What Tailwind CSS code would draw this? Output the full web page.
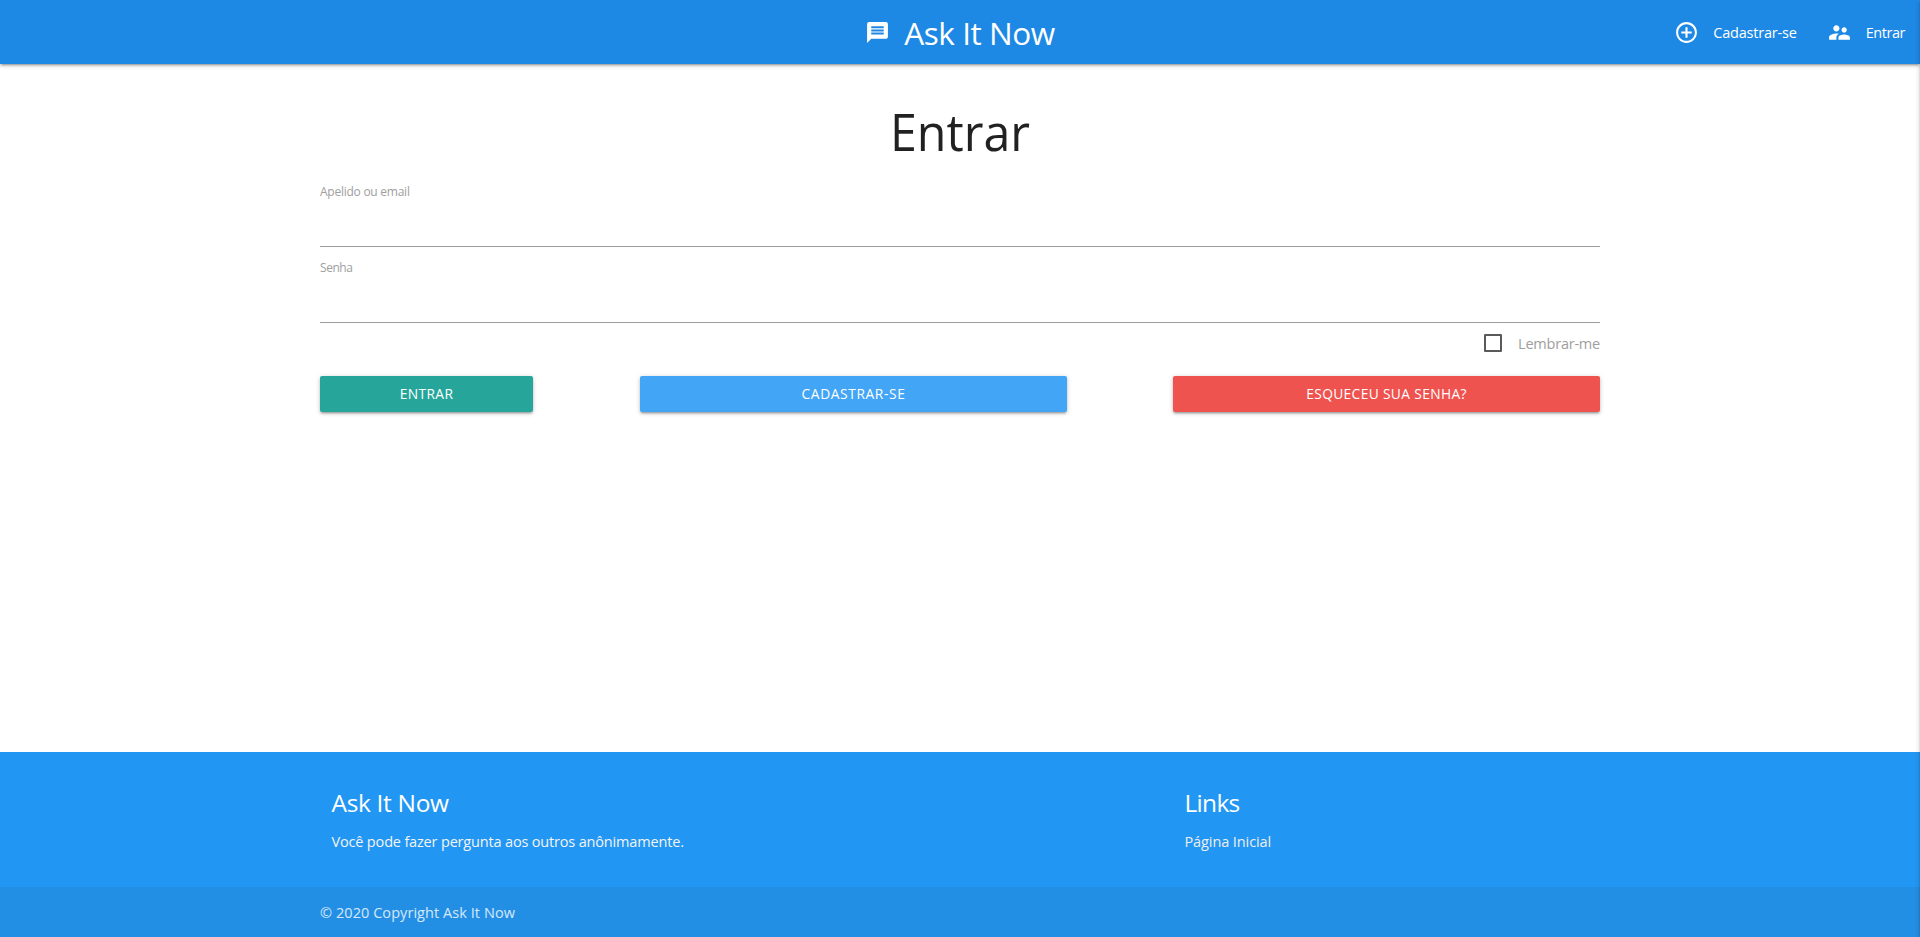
<!DOCTYPE html>
<html lang="pt-BR">
<head>
<meta charset="utf-8">
<title>Ask It Now</title>
<script src="https://cdn.jsdelivr.net/npm/@tailwindcss/browser@4"></script>
</head>
<body class="flex h-[937px] flex-col overflow-hidden bg-white font-['Open_Sans',sans-serif] text-[14.5px] text-black/87">
  <nav class="grid h-16 shrink-0 grid-cols-[1fr_auto_1fr] items-center bg-[#1e88e5] text-white shadow-[0_2px_2px_0_rgba(0,0,0,.14),0_3px_1px_-2px_rgba(0,0,0,.12),0_1px_5px_0_rgba(0,0,0,.2)]">
    <span></span>
    <a class="flex items-center gap-[14px]">
      <svg class="size-[25px]" viewBox="0 0 24 24" fill="currentColor"><path fill-rule="evenodd" d="M20 2H4c-1.100 0-2 .9-2 2v18l4-4h14c1.100 0 2-.9 2-2V4c0-1.100-.9-2-2-2zM18 14H6v-2h12v2zM18 11H6V9h12v2zM18 8H6V6h12v2z"/></svg>
      <span class="pt-0.5 text-[31.5px] leading-[62px] tracking-[-0.45px]">Ask It Now</span>
    </a>
    <div class="flex items-center justify-end pr-[15px]">
      <a class="flex items-center gap-[14px]">
        <svg class="size-[25px]" viewBox="0 0 24 24" fill="currentColor"><path d="M13 7h-2v4H7v2h4v4h2v-4h4v-2h-4V7zm-1-5C6.480 2 2 6.480 2 12s4.480 10 10 10 10-4.480 10-10S17.520 2 12 2zm0 18c-4.410 0-8-3.590-8-8s3.590-8 8-8 8 3.590 8 8-3.590 8-8 8z"/></svg>
        <span class="pt-0.5 tracking-[-0.2px]">Cadastrar-se</span>
      </a>
      <a class="ml-[30px] flex items-center gap-[14px]">
        <svg class="size-[25px]" viewBox="0 0 24 24" fill="currentColor"><path d="M16.5 12c1.380 0 2.490-1.120 2.490-2.500S17.880 7 16.500 7C15.120 7 14 8.120 14 9.500s1.120 2.500 2.500 2.500zM9 11c1.660 0 2.990-1.340 2.990-3S10.660 5 9 5C7.340 5 6 6.340 6 8s1.340 3 3 3zm7.500 3c-1.830 0-5.500.920-5.500 2.750V19h11v-2.250c0-1.830-3.670-2.750-5.500-2.750zM9 13c-2.330 0-7 1.170-7 3.500V19h7v-2.250c0-.850.330-2.340 2.370-3.470C10.500 13.100 9.660 13 9 13z"/></svg>
        <span class="pt-0.5 tracking-[-0.45px]">Entrar</span>
      </a>
    </div>
  </nav>

  <main class="mx-auto w-[1280px] grow pt-[36px]">
    <h1 class="scale-x-[.93] text-center text-[52px] leading-[62px]">Entrar</h1>
    <form>
      <label class="mt-[9px] flex h-[76px] flex-col border-b border-[#9e9e9e] pt-[13px] text-[12px] leading-4 tracking-[-0.25px] text-[#9e9e9e]">Apelido ou email</label>
      <label class="flex h-[76px] flex-col border-b border-[#9e9e9e] pt-[13px] text-[12px] leading-4 tracking-[-0.45px] text-[#9e9e9e]">Senha</label>
      <label class="mt-[11px] flex h-[18px] items-center justify-end gap-4 tracking-[-0.22px] text-[#9e9e9e]">
        <span class="size-[18px] rounded-[1px] border-2 border-[#5a5a5a]"></span>
        <span class="pt-px">Lembrar-me</span>
      </label>
      <div class="mt-6 flex justify-between text-[13.8px] text-white">
        <a class="h-9 w-[213px] rounded-[2px] bg-[#26a69a] text-center leading-9 tracking-[0.37px] shadow-[0_2px_2px_0_rgba(0,0,0,.14),0_3px_1px_-2px_rgba(0,0,0,.12),0_1px_5px_0_rgba(0,0,0,.2)]">ENTRAR</a>
        <a class="ml-[107px] h-9 w-[427px] rounded-[2px] bg-[#42a5f5] text-center leading-9 tracking-[0.6px] shadow-[0_2px_2px_0_rgba(0,0,0,.14),0_3px_1px_-2px_rgba(0,0,0,.12),0_1px_5px_0_rgba(0,0,0,.2)]">CADASTRAR-SE</a>
        <a class="ml-[106px] h-9 w-[427px] rounded-[2px] bg-[#ef5350] text-center leading-9 tracking-[0.34px] shadow-[0_2px_2px_0_rgba(0,0,0,.14),0_3px_1px_-2px_rgba(0,0,0,.12),0_1px_5px_0_rgba(0,0,0,.2)]">ESQUECEU SUA SENHA?</a>
      </div>
    </form>
  </main>

  <footer class="shrink-0 bg-[#2196f3] text-white">
    <div class="mx-auto flex h-[135px] w-[1280px] pt-[35px]">
      <section class="w-[853px] pl-[11.500px]">
        <h5 class="text-[24.5px] leading-8 tracking-[-0.33px]">Ask It Now</h5>
        <p class="mt-3 leading-[22px] tracking-[-0.17px] text-[#f4f4f4]">Você pode fazer pergunta aos outros anônimamente.</p>
      </section>
      <section class="pl-[11.500px]">
        <h5 class="text-[24.5px] leading-8 tracking-[-0.7px]">Links</h5>
        <p class="mt-3 leading-[22px] tracking-[-0.1px] text-[#eeeeee]">Página Inicial</p>
      </section>
    </div>
    <div class="h-[50px] bg-[#333333]/8">
      <p class="mx-auto w-[1280px] pt-px leading-[50px] tracking-[0.06px] text-white/80">© 2020 Copyright Ask It Now</p>
    </div>
  </footer>

  <!-- shadow of the closed side menu -->
  <div class="fixed inset-y-0 left-full w-75 shadow-[0_2px_2px_0_rgba(0,0,0,.14),0_3px_1px_-2px_rgba(0,0,0,.12),0_1px_5px_0_rgba(0,0,0,.2)]"></div>
</body>
</html>
